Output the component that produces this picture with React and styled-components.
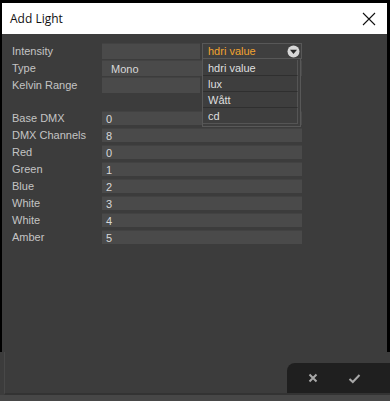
import React from 'react';
import styled, { createGlobalStyle } from 'styled-components';

const GlobalStyle = createGlobalStyle`
  html, body {
    margin: 0;
    padding: 0;
    background: #3c3c3c;
  }
`;

const Screen = styled.div`
  width: 390px;
  height: 401px;
  display: flex;
  flex-direction: column;
  background: #3c3c3c;
  font-family: "Liberation Sans", Arial, sans-serif;
  overflow: hidden;
`;

const Dialog = styled.div`
  height: 352px;
  display: flex;
  flex-direction: column;
  border-top: 3px solid #000;
  border-left: 2px solid #000;
  border-right: 3px solid #000;
  box-sizing: border-box;
  background: #3c3c3c;
`;

const TitleBar = styled.div`
  height: 31px;
  flex: none;
  background: #fff;
  display: flex;
  align-items: center;
  justify-content: space-between;
  padding: 0 10px 0 8px;
  font-family: "Open Sans", "Noto Sans", sans-serif;
  font-size: 12px;
  color: #111;
`;

const CloseButton = styled.svg`
  width: 14px;
  height: 14px;
  margin-right: 1px;
`;

const Body = styled.div`
  padding: 9px 0 0 10px;
  display: flex;
  flex-direction: column;
`;

const Group = styled.div`
  display: flex;
  flex-direction: column;
  gap: ${(p) => p.$gap}px;
  margin-bottom: ${(p) => p.$after || 0}px;
`;

const Row = styled.div`
  display: grid;
  grid-template-columns: 90px 200px;
  align-items: center;
  height: ${(p) => p.$h}px;
`;

const Label = styled.div`
  font-size: 11px;
  color: #c4c4c4;
  white-space: nowrap;
`;

const Field = styled.div`
  height: ${(p) => p.$h}px;
  width: ${(p) => p.$w || 200}px;
  background: #4a4a4a;
  border-top: 1px solid #424242;
  box-sizing: border-box;
  color: #d8d8d8;
  font-size: 11px;
  display: flex;
  align-items: center;
  padding-left: ${(p) => p.$pad || 4}px;
`;

const Split = styled.div`
  display: flex;
  gap: 2px;
  position: relative;
`;

const Combo = styled.div`
  position: relative;
  width: 100px;
  height: 16px;
  background: #3f3f3f;
  border: 1px solid #585858;
  box-sizing: border-box;
  display: flex;
  align-items: center;
  justify-content: space-between;
  padding: 0 1px 0 5px;
  color: #f0a330;
  font-size: 11px;
  z-index: 2;
`;

const Menu = styled.div`
  position: absolute;
  top: 15px;
  left: -1px;
  width: 99px;
  background: #3e3e3e;
  border: 1px solid #585858;
  border-top: none;
  box-sizing: border-box;
  display: flex;
  flex-direction: column;
  padding: 1px 2px 2px 0;
`;

const MenuItem = styled.div`
  height: 16px;
  box-sizing: border-box;
  border-bottom: 1px solid #2f2f2f;
  border-right: 1px solid #555;
  display: flex;
  align-items: center;
  padding-left: 5px;
  color: #dedede;
  font-size: 11px;
  &:last-child {
    border-bottom: 1px solid #555;
  }
`;

const Footer = styled.div`
  flex: 1;
  display: flex;
  flex-direction: column;
`;

const FooterMain = styled.div`
  flex: 1;
  display: flex;
  justify-content: flex-end;
  align-items: flex-end;
  border-left: 1px solid #484848;
  margin-left: 4px;
  border-bottom: 2px solid #333;
`;

const ActionBar = styled.div`
  width: 103px;
  height: 30px;
  background: #1f1f1f;
  border-top-left-radius: 8px;
  display: flex;
  align-items: center;
  gap: 30px;
  padding-left: 21px;
  box-sizing: border-box;
`;

const ActionIcon = styled.svg`
  width: ${(p) => p.$s}px;
  height: ${(p) => p.$s}px;
`;

const BottomStrip = styled.div`
  height: 6px;
  background: #474747;
`;

const lowerRows = [
  ['Base DMX', '0'],
  ['DMX Channels', '8'],
  ['Red', '0'],
  ['Green', '1'],
  ['Blue', '2'],
  ['White', '3'],
  ['White', '4'],
  ['Amber', '5'],
];

const DropArrow = () => (
  <svg width="13" height="13" viewBox="0 0 13 13">
    <circle cx="6.5" cy="6.5" r="6" fill="#d8d8d8" />
    <path d="M3 4.8 L10 4.8 L6.5 9 Z" fill="#2a2a2a" />
  </svg>
);

const App = () => {
  return (
    <Screen>
      <GlobalStyle />
      <Dialog>
        <TitleBar>
          <span>Add Light</span>
          <CloseButton viewBox="0 0 14 14">
            <path d="M1 1 L13 13 M13 1 L1 13" stroke="#111" strokeWidth="1.1" fill="none" />
          </CloseButton>
        </TitleBar>
        <Body>
          <Group $gap={1} $after={18}>
            <Row $h={16}>
              <Label>Intensity</Label>
              <Split>
                <Field $h={16} $w={98} />
                <Combo>
                  <span>hdri value</span>
                  <DropArrow />
                  <Menu>
                    <MenuItem>hdri value</MenuItem>
                    <MenuItem>lux</MenuItem>
                    <MenuItem>Wått</MenuItem>
                    <MenuItem>cd</MenuItem>
                  </Menu>
                </Combo>
              </Split>
            </Row>
            <Row $h={16}>
              <Label>Type</Label>
              <Field $h={16} $pad={9}>Mono</Field>
            </Row>
            <Row $h={16}>
              <Label>Kelvin Range</Label>
              <Field $h={16} $w={98} />
            </Row>
          </Group>
          <Group $gap={3}>
            {lowerRows.map(([label, value], i) => (
              <Row key={i} $h={14}>
                <Label>{label}</Label>
                <Field $h={14}>{value}</Field>
              </Row>
            ))}
          </Group>
        </Body>
      </Dialog>
      <Footer>
        <FooterMain>
          <ActionBar>
            <ActionIcon $s={10} viewBox="0 0 10 10">
              <path d="M1.5 1.5 L8.5 8.5 M8.5 1.5 L1.5 8.5" stroke="#a8a8a8" strokeWidth="2" fill="none" />
            </ActionIcon>
            <ActionIcon $s={13} viewBox="0 0 13 13">
              <path d="M1.5 7 L4.8 10 L11.5 3" stroke="#a8a8a8" strokeWidth="2" fill="none" />
            </ActionIcon>
          </ActionBar>
        </FooterMain>
        <BottomStrip />
      </Footer>
    </Screen>
  );
};

export default App;
